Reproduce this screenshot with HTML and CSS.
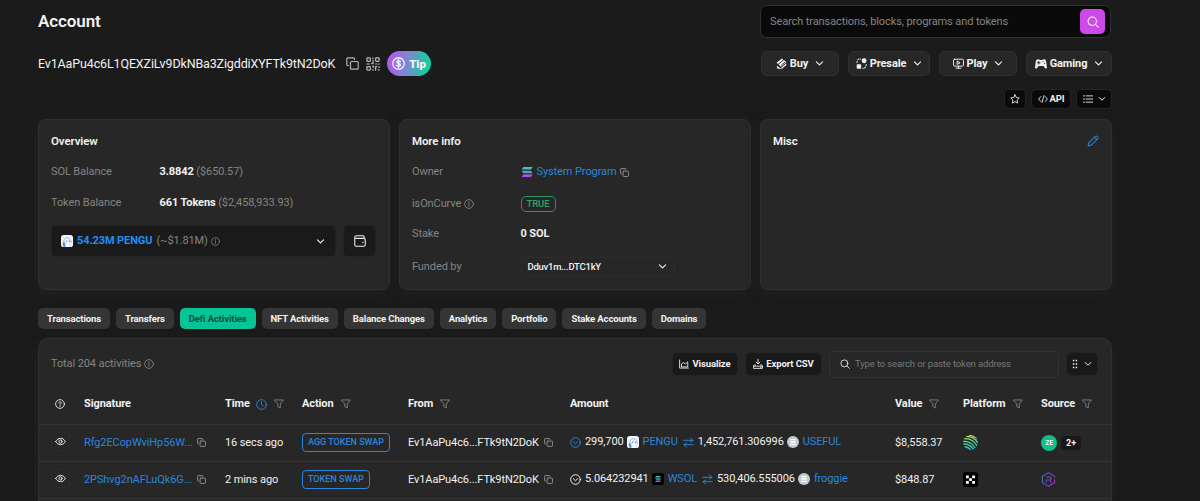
FILE: index.html
```html
<!DOCTYPE html>
<html lang="en">
<head>
  <meta charset="UTF-8">
  <title>Account</title>
  <link rel="stylesheet" href="styles.css">
</head>
<body>

  <!-- Icon set -->
  <svg class="sprite" aria-hidden="true">
    <defs>
      <linearGradient id="sol" x1="0" y1="1" x2="1" y2="0">
        <stop offset="0" stop-color="#b845f5"/><stop offset=".5" stop-color="#7f8fe8"/><stop offset="1" stop-color="#19e6a5"/>
      </linearGradient>
      <linearGradient id="solv" x1="0" y1="1" x2="0" y2="0">
        <stop offset="0" stop-color="#b04cf0"/><stop offset="1" stop-color="#25d8a8"/>
      </linearGradient>
      <linearGradient id="jup" x1="0" y1="1" x2="0" y2="0">
        <stop offset="0" stop-color="#18c4d8"/><stop offset=".5" stop-color="#4fd69a"/><stop offset="1" stop-color="#c4ee6a"/>
      </linearGradient>
      <linearGradient id="ray" x1="0" y1="0" x2="1" y2="0.4">
        <stop offset="0" stop-color="#3f7fb0"/><stop offset=".5" stop-color="#4f4ac8"/><stop offset="1" stop-color="#9a35c8"/>
      </linearGradient>
      <clipPath id="ball"><circle cx="8" cy="8" r="8"/></clipPath>
    </defs>
    <symbol id="copy" viewBox="0 0 16 16"><rect x="5.5" y="5.5" width="9.5" height="9.5" rx="1.3"/><path d="M3 10.5H2.2A1.2 1.2 0 0 1 1 9.300V2.200A1.200 1.200 0 0 1 2.200 1h7.100a1.200 1.200 0 0 1 1.200 1.200V3"/></symbol>
    <symbol id="down" viewBox="0 0 16 16"><path d="M2.500 5l5.500 5.500L13.500 5"/></symbol>
    <symbol id="search" viewBox="0 0 16 16"><circle cx="7" cy="7" r="5.600"/><path d="M11.200 11.200L15 15"/></symbol>
    <symbol id="info" viewBox="0 0 16 16"><circle cx="8" cy="8" r="7"/><path d="M8 7.200v4.300M8 4.300v1.500"/></symbol>
    <symbol id="filter" viewBox="0 0 16 16"><path d="M1 1.500h14L10 8v6.500L6 12V8z"/></symbol>
    <symbol id="clock" viewBox="0 0 16 16"><circle cx="8" cy="8" r="7"/><path d="M8 3.800V8l2.600 2.400"/></symbol>
    <symbol id="circle-down" viewBox="0 0 16 16"><circle cx="8" cy="8" r="7"/><path d="M5 7l3 2.800L11 7"/></symbol>
    <symbol id="help" viewBox="0 0 16 16"><circle cx="8" cy="8" r="7"/><path d="M6 6.600C6 3.900 10 4 10 6.400 10 7.900 8 7.900 8 9.400M8 11v1.200"/></symbol>
    <symbol id="eye" viewBox="0 0 16 16"><path d="M1 8c3.200-6.200 10.800-6.200 14 0-3.200 6.200-10.800 6.200-14 0z"/><circle cx="8" cy="8" r="2.300"/></symbol>
    <symbol id="swap" viewBox="0 0 16 16"><path d="M1 4.800h13.500M11 1.300L14.500 4.800 11 7M15 11.200H1.500M5 14.700L1.500 11.200 5 9"/></symbol>
    <symbol id="pengu" viewBox="0 0 16 16"><rect width="16" height="16" rx="3.500" fill="#f1f5fa" stroke="none"/><path d="M4 14.500C2.600 8.500 4 3.800 8.300 3.600c4.200 0 5.400 3.600 5.200 7" fill="none" stroke="#8fabdf" stroke-width="1.200"/><path d="M6.500 15.500V9c0-3 5.500-3 5.500 0v6.500" fill="#fff" stroke="#bccde8"/><path d="M4.500 8.500L2 11.500l1.500 4H6z" fill="#5a87e0" stroke="none"/><circle cx="8" cy="8.300" r=".7" fill="#345" stroke="none"/><circle cx="11" cy="8.300" r=".7" fill="#345" stroke="none"/></symbol>
    <symbol id="coin" viewBox="0 0 16 16"><circle cx="8" cy="8" r="8" fill="#c3cad3" stroke="none"/><path d="M4.500 4.700h7M4.500 8h7M4.500 11.300h7" stroke="#fff" stroke-width="1.700"/></symbol>
  </svg>

  <div class="page">
    <header class="top">
      <h1>Account</h1>
      <div class="search-main">
        <span>Search transactions, blocks, programs and tokens</span>
        <button class="search-btn"><svg class="ic"><use href="#search"/></svg></button>
      </div>
    </header>

    <div class="address-row">
      <span class="address">Ev1AaPu4c6L1QEXZiLv9DkNBa3ZigddiXYFTk9tN2DoK</span>
      <svg class="ic copy-big"><use href="#copy"/></svg>
      <svg class="ic qr" viewBox="0 0 16 16">
        <rect x="1" y="1" width="4" height="4" rx="1"/><rect x="11" y="1" width="4" height="4" rx="1"/><rect x="1" y="11" width="4" height="4" rx="1"/>
        <path d="M8 1v1M8 4v3.500H6.500M1 8h3M11 8h1.500M14.500 8h.8M8 10v1.500M8 14v1M11 15v-4h1.500M15 11v1M14 14.800h1M8 11.200h1"/>
      </svg>
      <button class="tip">
        <svg class="ic" viewBox="0 0 16 16"><circle cx="8" cy="8" r="7.100"/><path d="M10.400 5.800C9.700 4.300 5.800 4.300 5.800 6.300c0 2.200 4.700 1.200 4.700 3.500 0 2-4.200 2-5 .3M8 3v10"/></svg>
        Tip
      </button>
      <nav class="menu">
        <button class="menu-btn buy">
          <svg class="ic solid" viewBox="0 0 16 16"><path d="M.8 6.800L8.500.8l2 1.600-7.800 6.300zM3.600 9.400l8-6.400 3.400 3.200-7.700 6.500zM1 11.200l5.800 3.600 8.400-7v2.400L8.500 15.800H2z"/><path class="cut" d="M8 10.300L12.500 6.500"/></svg>
          Buy <svg class="ic down"><use href="#down"/></svg>
        </button>
        <button class="menu-btn presale">
          <svg class="ic solid" viewBox="0 0 16 16"><circle cx="11.800" cy="4" r="3.600"/><rect x="1" y="9" width="6.500" height="6.500" rx="1"/><path class="line" d="M1.500 6.500V5M2.500 2.700L4 1.600M6 1.400h.8M14.800 9.500v1.500M13.900 13l-1.300 1.300M10.500 14.900h-.8"/></svg>
          Presale <svg class="ic down"><use href="#down"/></svg>
        </button>
        <button class="menu-btn play">
          <svg class="ic" viewBox="0 0 16 16"><rect x=".8" y="1.800" width="14.400" height="10" rx="1.500"/><path d="M8 12v2.800M4.500 14.800h7M6.500 4.700l3.800 2.200-3.800 2.200z"/></svg>
          Play <svg class="ic down"><use href="#down"/></svg>
        </button>
        <button class="menu-btn gaming">
          <svg class="ic solid" viewBox="0 0 16 16"><path d="M4 1.800c-2 0-2.600 1.400-3 3.500L.1 12c-.2 2.300 1.700 2.600 2.700 1.200L4.700 10.500h6.600l1.900 2.700c1 1.400 2.900 1.100 2.700-1.200L15 5.300c-.4-2.100-1-3.500-3-3.500-1.300 0-1.400.9-2.400.9H6.400c-1 0-1.100-.9-2.400-.9z"/><path class="cut" d="M5 4.500v3.600M3.200 6.300h3.600M10.500 4.800h.1M12.500 7.300h.1"/></svg>
          Gaming <svg class="ic down"><use href="#down"/></svg>
        </button>
      </nav>
    </div>

    <div class="tools">
      <button class="tool star"><svg class="ic" viewBox="0 0 16 16"><path d="M8 1.200l2.100 4.400 4.800.7-3.500 3.400.9 4.800L8 12.200l-4.300 2.300.9-4.800L1.100 6.300l4.800-.7z"/></svg></button>
      <button class="tool api"><svg class="ic" viewBox="0 0 16 16"><path d="M4.500 4L1 8l3.500 4M11.500 4L15 8l-3.500 4M9.500 2.500l-3 11"/></svg>API</button>
      <button class="tool list"><svg class="ic" viewBox="0 0 16 16"><path d="M5 3h11M5 8h11M5 13h11M.8 3h1.600M.8 8h1.600M.8 13h1.600"/></svg><svg class="ic down"><use href="#down"/></svg></button>
    </div>

    <!-- Summary cards -->
    <section class="cards">
      <div class="card">
        <h2>Overview</h2>
        <div class="info sol-row"><label>SOL Balance</label><div><b>3.8842</b> <i>($650.57)</i></div></div>
        <div class="info token-row"><label>Token Balance</label><div><b>661 Tokens</b> <i>($2,458,933.93)</i></div></div>
        <div class="holding">
          <div class="select">
            <svg class="token"><use href="#pengu"/></svg>
            <b>54.23M PENGU</b><i>(~$1.81M)</i>
            <svg class="ic info-s"><use href="#info"/></svg>
            <svg class="ic down"><use href="#down"/></svg>
          </div>
          <button class="wallet"><svg class="ic" viewBox="0 0 16 16"><path d="M13.500 4.500V2.300A1.300 1.300 0 0 0 12.200 1H3a2 2 0 0 0-2 2v10a2 2 0 0 0 2 2h10a2 2 0 0 0 2-2V6.500a2 2 0 0 0-2-2H2.500M11.500 9.700h.8"/></svg></button>
        </div>
      </div>

      <div class="card">
        <h2>More info</h2>
        <div class="info owner"><label>Owner</label>
          <div class="owner-link">
            <svg class="sol-logo" viewBox="0 0 16 14"><path fill="url(#solv)" d="M3 0h13l-2.500 3.600H.5zM.5 5.200h13L16 8.800H3zM3 10.400h13L13.500 14H.5z"/></svg>
            <a>System Program</a><svg class="ic copy"><use href="#copy"/></svg>
          </div>
        </div>
        <div class="info curve"><label>isOnCurve <svg class="ic info-m"><use href="#info"/></svg></label><div><span class="true">TRUE</span></div></div>
        <div class="info stake"><label>Stake</label><div><b>0 SOL</b></div></div>
        <div class="info funded"><label>Funded by</label><div class="funder">Dduv1m...DTC1kY <svg class="ic down"><use href="#down"/></svg></div></div>
      </div>

      <div class="card misc">
        <h2>Misc</h2>
        <svg class="ic edit" viewBox="0 0 16 16"><path d="M1.500 14.500l.8-4L11 1.800c1.800-1.500 4.600 1.200 3.200 3.200L5.500 13.700zM9.800 3l3.200 3.200"/></svg>
      </div>
    </section>

    <nav class="tabs">
      <a>Transactions</a><a>Transfers</a><a class="active">Defi Activities</a><a>NFT Activities</a><a>Balance Changes</a><a>Analytics</a><a>Portfolio</a><a>Stake Accounts</a><a>Domains</a>
    </nav>

    <!-- Activity table -->
    <section class="panel">
      <div class="bar">
        <span class="total">Total 204 activities <svg class="ic info-m"><use href="#info"/></svg></span>
        <button class="dark visualize"><svg class="ic" viewBox="0 0 16 16"><path d="M1 1.500v13h14M4 12V8l3-2.500L10 8l4-3.500V12z"/></svg>Visualize</button>
        <button class="dark export"><svg class="ic" viewBox="0 0 16 16"><path d="M8 .5v7M5 5l3 3 3-3M4 9.500H2L1 11v4h14v-4l-1-1.500h-2M1 11.500h14M12 13.300h1"/></svg>Export CSV</button>
        <div class="filter-box"><svg class="ic"><use href="#search"/></svg>Type to search or paste token address</div>
        <button class="dark grip"><svg class="dots" viewBox="0 0 8 14"><path d="M1 1h2v2H1zM5 1h2v2H5zM1 6h2v2H1zM5 6h2v2H5zM1 11h2v2H1zM5 11h2v2H5z"/></svg><svg class="ic down"><use href="#down"/></svg></button>
      </div>

      <div class="row head">
        <span><svg class="ic help"><use href="#help"/></svg></span>
        <span>Signature</span>
        <span>Time <svg class="ic clock"><use href="#clock"/></svg><svg class="ic filter"><use href="#filter"/></svg></span>
        <span>Action <svg class="ic filter"><use href="#filter"/></svg></span>
        <span>From <svg class="ic filter"><use href="#filter"/></svg></span>
        <span>Amount</span>
        <span>Value <svg class="ic filter"><use href="#filter"/></svg></span>
        <span>Platform <svg class="ic filter"><use href="#filter"/></svg></span>
        <span>Source <svg class="ic filter"><use href="#filter"/></svg></span>
      </div>

      <div class="row">
        <span><button class="eye"><svg class="ic"><use href="#eye"/></svg></button></span>
        <span><a class="sig">Rfg2ECopWviHp56W...</a><svg class="ic copy"><use href="#copy"/></svg></span>
        <span>16 secs ago</span>
        <span><em class="action">AGG TOKEN SWAP</em></span>
        <span><span class="from">Ev1AaPu4c6...FTk9tN2DoK</span><svg class="ic copy"><use href="#copy"/></svg></span>
        <span class="amount">
          <svg class="ic expand blue"><use href="#circle-down"/></svg>299,700
          <svg class="token"><use href="#pengu"/></svg><a>PENGU</a>
          <svg class="ic swap"><use href="#swap"/></svg>1,452,761.306996
          <svg class="token"><use href="#coin"/></svg><a>USEFUL</a>
        </span>
        <span>$8,558.37</span>
        <span><svg class="platform" viewBox="0 0 16 16"><g clip-path="url(#ball)" fill="none" stroke="url(#jup)" stroke-width="1.400"><path d="M3 1.500c5-.5 10 2.500 13 7M1 4c6-.8 11 2.500 14.500 8M0 6.800c6-.6 10.500 2.500 13.500 8M0 9.700c5-.5 9 2 11.500 6.500M.5 12.600c3-.3 6 1 8 4M6 .2c4 .2 7 1.500 9.500 4.500"/></g></svg></span>
        <span><span class="ze">ZE</span><span class="more">2+</span></span>
      </div>

      <div class="row">
        <span><button class="eye"><svg class="ic"><use href="#eye"/></svg></button></span>
        <span><a class="sig">2PShvg2nAFLuQk6G...</a><svg class="ic copy"><use href="#copy"/></svg></span>
        <span>2 mins ago</span>
        <span><em class="action">TOKEN SWAP</em></span>
        <span><span class="from">Ev1AaPu4c6...FTk9tN2DoK</span><svg class="ic copy"><use href="#copy"/></svg></span>
        <span class="amount">
          <svg class="ic expand"><use href="#circle-down"/></svg>5.064232941
          <svg class="token" viewBox="0 0 16 16"><rect width="16" height="16" rx="3.500" fill="#000"/><path fill="url(#solv)" d="M5.500 4h6.500l-1.500 2H4zM4 7h6.500l1.500 2H5.500zM5.500 10h6.500l-1.500 2H4z"/></svg><a>WSOL</a>
          <svg class="ic swap"><use href="#swap"/></svg>530,406.555006
          <svg class="token"><use href="#coin"/></svg><a>froggie</a>
        </span>
        <span>$848.87</span>
        <span><svg class="platform" viewBox="0 0 16 16"><rect width="16" height="16" rx="3" fill="#000"/><path fill="#fff" d="M3.200 3.800h3v2.800h-3zM9.800 3.800h3v2.800h-3zM6.500 6.700h3v2.800h-3zM3.200 9.600h3v2.800h-3zM9.800 9.600h3v2.800h-3z"/></svg></span>
        <span><svg class="platform" viewBox="0 0 16 16"><path fill="none" stroke="url(#ray)" stroke-width="1.200" d="M14.500 6V4.500L8 .8 1.500 4.500v7L8 15.200l6.500-3.700V8M5.500 11.500V8.500h4c2 0 2-3 0-3h-4M9 8.500l2 3"/></svg></span>
      </div>
    </section>
  </div>

</body>
</html>
```
FILE: styles.css
```css
* {
  box-sizing: border-box;
}

body {
  margin: 0;
  height: 501px;
  overflow: hidden;
  background-color: #1b1b1b;
  color: #f2f2f2;
  font-family: Roboto, sans-serif;
  font-size: 11px;
  line-height: 14px;
  letter-spacing: -0.1px;
}

button {
  font: inherit;
  letter-spacing: inherit;
  color: inherit;
  border: none;
  padding: 0;
  display: flex;
  align-items: center;
  justify-content: center;
}

h1, h2 {
  margin: 0;
  font-weight: 600;
}

i, em {
  font-style: normal;
}

b {
  font-weight: 700;
}

a {
  color: #2a86dc;
}

svg {
  flex: none;
}

.sprite {
  position: absolute;
  width: 0;
  height: 0;
}

.ic {
  width: 11px;
  height: 11px;
  fill: none;
  stroke: currentColor;
  stroke-width: 1.4;
  stroke-linecap: round;
  stroke-linejoin: round;
}

.ic.down {
  width: 9px;
  height: 9px;
  stroke-width: 2;
}

.solid {
  fill: currentColor;
  stroke: none;
}

.solid .cut {
  stroke: #282828;
  stroke-width: 1.3;
}

.solid .line {
  stroke: currentColor;
  stroke-width: 1.5;
  fill: none;
}

.page {
  width: 1074px;
  margin-left: 38px;
  padding-top: 5px;
}

/* Header */
.top {
  display: flex;
  justify-content: space-between;
  height: 33px;
}

h1 {
  font-size: 17px;
  line-height: 33px;
}

.search-main {
  display: flex;
  align-items: center;
  justify-content: space-between;
  width: 351px;
  height: 33px;
  margin-right: 1px;
  padding: 0 5px 0 9px;
  border: 1px solid #303030;
  border-radius: 7px;
  background-color: #0a0a0a;
  color: #858585;
}

.search-btn {
  width: 25px;
  height: 25px;
  border-radius: 5px;
  background-color: #cc4be8;
  color: #fff;
}

.search-btn .ic {
  width: 12px;
  height: 12px;
}

.address-row {
  display: flex;
  align-items: center;
  height: 25px;
  margin-top: 13px;
}

.address {
  width: 298px;
  font-size: 12.5px;
  letter-spacing: -0.14px;
  white-space: nowrap;
}

.copy-big {
  width: 13px;
  height: 13px;
  margin-left: 10px;
  color: #b8b8b8;
}

.qr {
  width: 14px;
  height: 14px;
  margin-left: 7px;
  color: #bbb;
}

.tip {
  gap: 4px;
  width: 44px;
  height: 25px;
  margin-left: 7px;
  border-radius: 13px;
  background: linear-gradient(100deg, #b055f0 5%, #8681d8 40%, #14cda0 90%);
  font-size: 11.5px;
  font-weight: 900;
}

.tip .ic {
  width: 13px;
  height: 13px;
  stroke-width: 1.6;
}

.menu {
  display: flex;
  gap: 9px;
  margin-left: auto;
}

.menu-btn {
  height: 25px;
  gap: 3px;
  border: 1px solid #303030;
  border-radius: 6px;
  background-color: #272727;
  font-weight: 700;
}

.menu-btn .down {
  margin-left: 4px;
}

.buy, .play {
  width: 78px;
}

.presale {
  width: 82px;
}

.gaming {
  width: 86px;
}

.gaming .solid {
  width: 12px;
  height: 12px;
}

.tools {
  display: flex;
  justify-content: flex-end;
  gap: 5px;
  height: 20px;
  margin-top: 13px;
}

.tool {
  gap: 2px;
  border: 1px solid #252525;
  border-radius: 5px;
  background-color: #0a0a0a;
  font-size: 9.5px;
  font-weight: 700;
}

.star {
  width: 22px;
}

.api {
  width: 40px;
}

.list {
  width: 36px;
  gap: 5px;
}

.tool .ic {
  width: 10px;
  height: 10px;
}

.tool .down {
  width: 8px;
  height: 8px;
}

/* Cards */
.cards {
  display: grid;
  grid-template-columns: repeat(3, 1fr);
  gap: 9px;
  margin-top: 10px;
}

.card {
  height: 171px;
  padding: 14px 12px;
  border: 1px solid #303030;
  border-radius: 8px;
  background-color: #272727;
  box-shadow: 0 4px 14px rgba(38, 42, 42, 0.4);
}

h2 {
  font-size: 11.5px;
  line-height: 14px;
}

.info {
  display: grid;
  grid-template-columns: 108.5px 1fr;
  align-items: center;
  height: 14px;
}

.info label, i, .total {
  color: #858585;
}

.sol-row, .owner {
  margin-top: 17px;
}

.token-row {
  margin-top: 17px;
}

.holding {
  display: flex;
  gap: 7px;
  margin-top: 15px;
}

.select {
  display: flex;
  align-items: center;
  width: 285px;
  height: 32px;
  padding: 0 10px 0 9px;
  border: 1px solid #232323;
  border-radius: 5px;
  background-color: #1a1a1a;
}

.select b {
  margin: 0 4px;
  color: #1e90f5;
  font-weight: 700;
}

.select .down {
  margin-left: auto;
}

.select .info-s {
  width: 9px;
  height: 9px;
  margin-left: 3px;
  color: #858585;
}

.token {
  width: 12px;
  height: 12px;
  fill: none;
}

.wallet {
  width: 33px;
  height: 32px;
  border: 1px solid #232323;
  border-radius: 5px;
  background-color: #1a1a1a;
}

.wallet .ic {
  width: 12px;
  height: 12px;
}

.owner-link {
  display: flex;
  align-items: center;
}

.owner-link a {
  margin: 0 4px;
}

.sol-logo {
  width: 12px;
  height: 10px;
}

.copy {
  width: 9px;
  height: 9px;
  color: #8f8f8f;
  stroke-width: 1.7;
}

.info-m {
  width: 10px;
  height: 10px;
  vertical-align: -2px;
}

.curve {
  height: 16px;
  margin-top: 17px;
}

.true {
  display: block;
  width: 35px;
  border: 1px solid #27975a;
  border-radius: 5px;
  color: #2ca865;
  font-size: 9.5px;
  font-weight: 500;
  line-height: 14px;
  text-align: center;
}

.stake {
  margin-top: 15px;
}

.funded {
  height: 19px;
  margin-top: 16px;
}

.funder {
  display: flex;
  align-items: center;
  justify-content: space-between;
  width: 154px;
  height: 19px;
  padding: 0 7px 0 6px;
  border: 1px solid #2d2d2d;
  border-radius: 4px;
  font-size: 9.5px;
  font-weight: 500;
  letter-spacing: -0.25px;
}

.misc {
  display: flex;
  justify-content: space-between;
}

.edit {
  width: 12px;
  height: 12px;
  margin-top: 1px;
  color: #1e88e5;
}

/* Tabs */
.tabs {
  display: flex;
  gap: 6px;
  margin-top: 18px;
}

.tabs a {
  height: 21px;
  padding: 0 9px;
  border-radius: 5px;
  background-color: #353535;
  color: #f2f2f2;
  font-size: 9.5px;
  font-weight: 700;
  letter-spacing: -0.13px;
  line-height: 21px;
}

.tabs .active {
  background-color: #06c495;
  color: #0c5240;
}

/* Table */
.panel {
  height: 163px;
  margin-top: 9px;
  border: 1px solid #303030;
  border-bottom: none;
  border-radius: 10px 10px 0 0;
  background-color: #272727;
  box-shadow: 0 4px 14px rgba(38, 42, 42, 0.4);
}

.bar {
  display: flex;
  align-items: center;
  height: 50px;
  padding: 0 13px 0 12px;
}

.total {
  margin-right: auto;
}

.dark {
  height: 24px;
  gap: 3px;
  margin-right: 7px;
  border: 1px solid #242424;
  border-radius: 5px;
  background-color: #191919;
  font-size: 9.5px;
  font-weight: 700;
}

.dark .ic {
  width: 10px;
  height: 10px;
}

.visualize {
  width: 66px;
}

.export {
  width: 77px;
}

.filter-box {
  display: flex;
  align-items: center;
  gap: 5px;
  width: 230px;
  height: 27px;
  margin-right: 7px;
  padding-left: 10px;
  border: 1px solid #333;
  border-radius: 5px;
  color: #777;
  font-size: 9.5px;
  letter-spacing: -0.13px;
}

.filter-box .ic {
  width: 10px;
  height: 10px;
  color: #eee;
}

.grip {
  width: 32px;
  gap: 6px;
  margin-right: 0;
}

.grip .dots {
  width: 6px;
  height: 10px;
  fill: #fff;
}

.dark .down {
  width: 8px;
  height: 8px;
}

.row {
  display: grid;
  grid-template-columns: 33px 141px 77px 106px 162px 325px 68px 78px 1fr;
  align-items: center;
  height: 37px;
  padding: 0 0 1px 12px;
  border-bottom: 1px solid #343434;
}

.row > span {
  display: flex;
  align-items: center;
  white-space: nowrap;
}

.row.head {
  height: 36px;
  padding-bottom: 5px;
  font-weight: 700;
}

.help {
  width: 10px;
  height: 10px;
  margin-left: 4px;
}

.clock {
  margin-left: 6px;
  color: #1e88e5;
}

.filter {
  width: 10px;
  height: 10px;
  margin-left: 7px;
  color: #858585;
}

.eye {
  width: 19px;
  height: 19px;
  margin-bottom: 2px;
  border: 1px solid #2c2c2c;
  border-radius: 4px;
  background: none;
}

.eye .ic {
  width: 11px;
  height: 11px;
}

.sig {
  width: 108px;
}

.row .copy {
  margin-left: 5px;
}

.action {
  padding: 0 5px;
  border: 1px solid #2a86dc;
  border-radius: 4px;
  color: #2a86dc;
  font-size: 9px;
  font-weight: 500;
  letter-spacing: 0;
  line-height: 17px;
}

.expand {
  margin-right: 4px;
}

.blue {
  color: #2a86dc;
}

.amount {
  padding-bottom: 1px;
}

.amount .token {
  margin: 0 4px 0 3px;
}

.amount .swap {
  margin: 0 4px 0 5px;
  color: #2a86dc;
}

.platform {
  width: 15px;
  height: 15px;
}

.ze {
  width: 16px;
  height: 16px;
  border-radius: 50%;
  background-color: #0fbf90;
  font-size: 6.5px;
  font-weight: 700;
  line-height: 16px;
  text-align: center;
}

.more {
  margin-left: 4px;
  width: 20px;
  border-radius: 4px;
  background-color: #181818;
  font-size: 9px;
  font-weight: 700;
  text-align: center;
}
```
